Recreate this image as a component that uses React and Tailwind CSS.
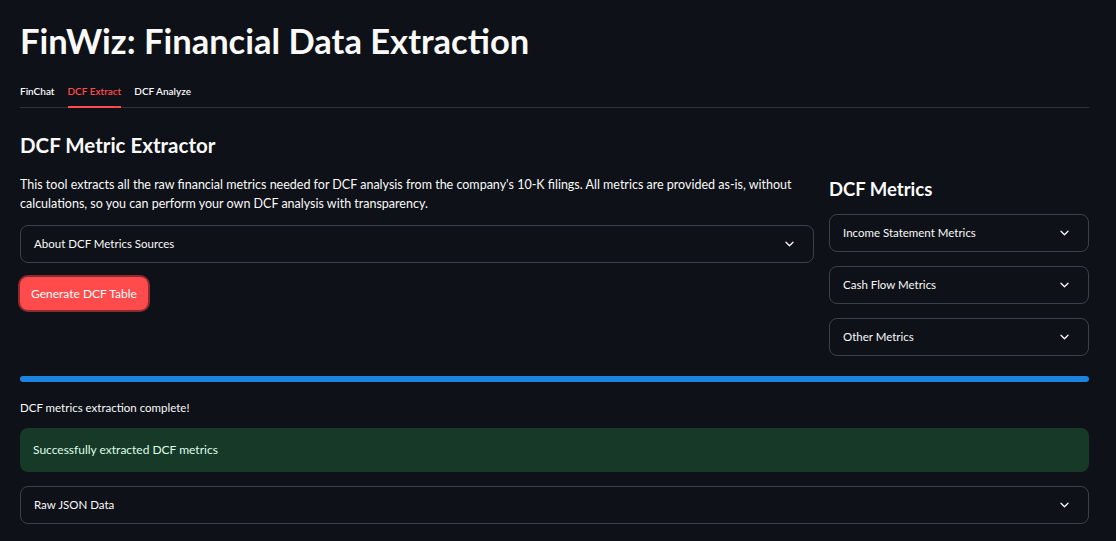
import React from "react";

const Chevron = () => (
  <svg width="9" height="6" viewBox="0 0 9 6" fill="none" className="shrink-0">
    <path d="M1 1.2l3.5 3.5L8 1.2" stroke="#fafafa" strokeWidth="1.3" strokeLinecap="round" strokeLinejoin="round" />
  </svg>
);

const Expander = ({ label }) => (
  <div className="h-[38px] rounded-lg border border-[#3d4049] flex items-center justify-between pl-[13px] pr-[19px]">
    <span className="text-[11.5px] text-[#fafafa]">{label}</span>
    <Chevron />
  </div>
);

export default function App() {
  const tabs = ["FinChat", "DCF Extract", "DCF Analyze"];
  return (
    <div
      className="min-h-screen bg-[#0e1117] text-[#fafafa] pl-5 pr-[27px] pt-[19px] pb-4"
      style={{ fontFamily: "Lato, 'Noto Sans', sans-serif" }}
    >
      <h1 className="text-[34.5px] leading-[44px] font-bold">FinWiz: Financial Data Extraction</h1>

      <div className="mt-[16px] flex gap-[13px] border-b border-[#31333b] text-[10px] font-semibold">
        {tabs.map((t) => (
          <div
            key={t}
            className={
              t === "DCF Extract"
                ? "pb-[7px] pt-[5px] text-[#ff4b4b] border-b-2 border-[#ff4b4b] -mb-px"
                : "pb-[7px] pt-[5px]"
            }
          >
            {t}
          </div>
        ))}
      </div>

      <h2 className="mt-[23px] text-[20.5px] leading-[28px] font-bold">DCF Metric Extractor</h2>

      <div className="mt-[16px] flex gap-[15px]">
        <div className="w-[794px]">
          <p className="text-[12.5px] leading-[19px] pr-4">
            This tool extracts all the raw financial metrics needed for DCF analysis from the company's 10-K filings. All metrics are provided as-is, without calculations, so you can perform your own DCF analysis with transparency.
          </p>
          <div className="mt-[12px]">
            <Expander label="About DCF Metrics Sources" />
          </div>
          <button className="mt-[14px] h-[33px] px-[11px] rounded-lg bg-[#ff4b4b] text-[12px] text-white ring-2 ring-[#8c2b2f]">
            Generate DCF Table
          </button>
        </div>
        <div className="flex-1 pt-[2px]">
          <h3 className="text-[18.5px] leading-[24px] font-bold">DCF Metrics</h3>
          <div className="mt-[13px] flex flex-col gap-[14px]">
            <Expander label="Income Statement Metrics" />
            <Expander label="Cash Flow Metrics" />
            <Expander label="Other Metrics" />
          </div>
        </div>
      </div>

      <div className="mt-[20px] h-[6px] rounded-full bg-[#1c83e1]" />

      <p className="mt-[18px] text-[11.5px] leading-[16px]">DCF metrics extraction complete!</p>

      <div className="mt-[12px] h-[44px] rounded-lg bg-[#173928] flex items-center px-[13px] text-[12px] text-[#dffde9]">
        Successfully extracted DCF metrics
      </div>

      <div className="mt-[14px]">
        <Expander label="Raw JSON Data" />
      </div>
    </div>
  );
}
